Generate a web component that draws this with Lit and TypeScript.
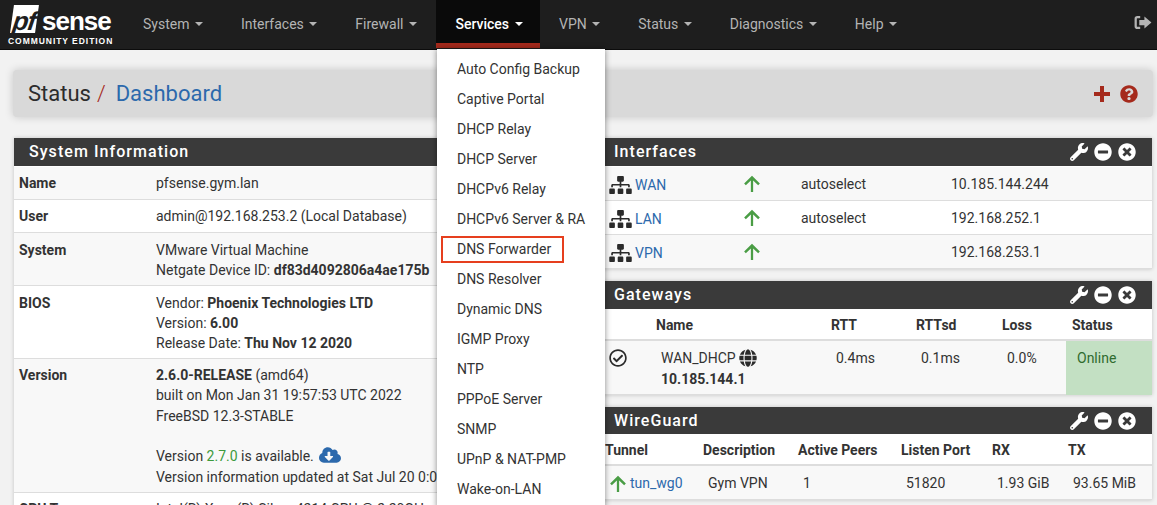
import { LitElement, html, css, svg } from 'lit';
import { customElement } from 'lit/decorators.js';

const icon = (box: string, d: string, cls: string) =>
  html`<svg class=${cls} viewBox=${box} fill="currentColor">${svg`<path d=${d}></path>`}</svg>`;

const WRENCH = 'M507.73 109.1c-2.24-9.03-13.54-12.09-20.12-5.51l-74.36 74.36-67.88-11.31-11.31-67.88 74.36-74.36c6.62-6.62 3.43-17.9-5.66-20.16-47.38-11.74-99.55.91-136.58 37.93-39.64 39.64-50.55 97.1-34.05 147.2L18.74 402.76c-24.99 24.99-24.99 65.51 0 90.5 24.99 24.99 65.51 24.99 90.5 0l213.21-213.21c50.12 16.71 107.47 5.68 147.37-34.22 37.07-37.07 49.7-89.32 37.91-136.73zM64 472c-13.25 0-24-10.75-24-24 0-13.26 10.75-24 24-24s24 10.74 24 24c0 13.25-10.75 24-24 24z';
const MINUS = 'M256 8C119 8 8 119 8 256s111 248 248 248 248-111 248-248S393 8 256 8zM124 296c-6.6 0-12-5.4-12-12v-56c0-6.6 5.4-12 12-12h264c6.6 0 12 5.4 12 12v56c0 6.6-5.4 12-12 12H124z';
const TIMES = 'M256 8C119 8 8 119 8 256s111 248 248 248 248-111 248-248S393 8 256 8zm121.6 313.1c4.7 4.7 4.7 12.3 0 17L338 377.6c-4.7 4.7-12.3 4.7-17 0L256 312l-65.1 65.6c-4.7 4.7-12.3 4.7-17 0L134.4 338c-4.7-4.7-4.7-12.3 0-17l65.6-65-65.6-65.1c-4.7-4.7-4.7-12.3 0-17l39.6-39.6c4.7-4.7 12.3-4.7 17 0l65 65.7 65.1-65.6c4.7-4.7 12.3-4.7 17 0l39.6 39.6c4.7 4.7 4.7 12.3 0 17L312 256l65.6 65.1z';
const QUESTION = 'M504 256c0 136.997-111.043 248-248 248S8 392.997 8 256C8 119.083 119.043 8 256 8s248 111.083 248 248zM262.655 90c-54.497 0-89.255 22.957-116.549 63.758-3.536 5.286-2.353 12.415 2.715 16.258l34.699 26.31c5.205 3.947 12.621 3.008 16.665-2.122 17.864-22.658 30.113-35.797 57.303-35.797 20.429 0 45.698 13.148 45.698 32.958 0 14.976-12.363 22.667-32.534 33.976C247.128 238.528 216 254.941 216 296v4c0 6.627 5.373 12 12 12h56c6.627 0 12-5.373 12-12v-1.333c0-28.462 83.186-29.647 83.186-106.667 0-58.002-60.165-102-116.531-102zM256 338c-25.365 0-46 20.635-46 46 0 25.364 20.635 46 46 46s46-20.636 46-46c0-25.365-20.635-46-46-46z';
const SITEMAP = 'M128 352H32c-17.67 0-32 14.33-32 32v96c0 17.67 14.33 32 32 32h96c17.67 0 32-14.33 32-32v-96c0-17.67-14.33-32-32-32zm-24-80h192v48h48v-48h192v48h48v-57.59c0-21.17-17.23-38.41-38.41-38.41H344v-64h40c17.67 0 32-14.33 32-32V32c0-17.67-14.33-32-32-32H256c-17.67 0-32 14.33-32 32v96c0 17.67 14.33 32 32 32h40v64H94.41C73.23 224 56 241.23 56 262.41V320h48v-48zm264 80h-96c-17.67 0-32 14.33-32 32v96c0 17.67 14.33 32 32 32h96c17.67 0 32-14.33 32-32v-96c0-17.67-14.33-32-32-32zm240 0h-96c-17.67 0-32 14.33-32 32v96c0 17.67 14.33 32 32 32h96c17.67 0 32-14.33 32-32v-96c0-17.67-14.33-32-32-32z';
const GLOBE = 'M336.5 160C322 70.7 287.8 8 248 8s-74 62.7-88.5 152h177zM152 256c0 22.2 1.2 43.5 3.3 64h185.3c2.1-20.5 3.3-41.8 3.3-64s-1.2-43.5-3.3-64H155.3c-2.1 20.5-3.3 41.8-3.3 64zm324.7-96c-28.6-67.9-86.5-120.4-158-141.6 24.4 33.8 41.2 84.7 50 141.6h108zM177.2 18.4C105.8 39.6 47.8 92.1 19.3 160h108c8.7-56.9 25.5-107.8 49.9-141.6zM487.4 192H372.7c2.1 21 3.3 42.5 3.3 64s-1.2 43-3.3 64h114.6c5.5-20.5 8.6-41.8 8.6-64s-3.1-43.5-8.5-64zM120 256c0-21.5 1.2-43 3.3-64H8.6C3.2 212.5 0 233.8 0 256s3.2 43.5 8.6 64h114.6c-2-21-3.2-42.5-3.2-64zm39.5 96c14.5 89.3 48.7 152 88.5 152s74-62.7 88.5-152h-177zm159.3 141.6c71.4-21.2 129.4-73.7 158-141.6h-108c-8.8 56.9-25.6 107.8-50 141.6zM19.3 352c28.6 67.9 86.5 120.4 158 141.6-24.4-33.8-41.2-84.7-50-141.6h-108z';
const CHECK = 'M256 8C119.033 8 8 119.033 8 256s111.033 248 248 248 248-111.033 248-248S392.967 8 256 8zm0 48c110.532 0 200 89.451 200 200 0 110.532-89.451 200-200 200-110.532 0-200-89.451-200-200 0-110.532 89.451-200 200-200m140.204 130.267l-22.536-22.718c-4.667-4.705-12.265-4.736-16.97-.068L215.346 303.697l-59.792-60.277c-4.667-4.705-12.265-4.736-16.97-.069l-22.719 22.536c-4.705 4.667-4.736 12.265-.068 16.971l90.781 91.516c4.667 4.705 12.265 4.736 16.97.068l172.589-171.204c4.704-4.668 4.734-12.266.067-16.971z';
const CLOUD = 'M537.6 226.6c4.1-10.7 6.4-22.4 6.4-34.6 0-53-43-96-96-96-19.7 0-38.1 6-53.3 16.2C367 64.2 315.3 32 256 32c-88.4 0-160 71.6-160 160 0 2.7.1 5.4.2 8.1C40.2 219.8 0 273.2 0 336c0 79.5 64.5 144 144 144h368c70.7 0 128-57.3 128-128 0-61.9-44-113.6-102.4-125.4zm-132.9 88.7L299.3 420.7c-6.2 6.2-16.4 6.2-22.6 0L171.3 315.3c-10.1-10.1-2.9-27.3 11.3-27.3H248V176c0-8.8 7.2-16 16-16h48c8.8 0 16 7.2 16 16v112h65.4c14.2 0 21.4 17.2 11.3 27.3z';
const ARROW = 'M8.3 17.5V5.2L3 10.4 1.2 8.6 9.5.4l8.3 8.2-1.8 1.8-5.3-5.2v12.3z';
const PLUS = 'M7 1h4v6h6v4h-6v6H7v-6H1V7h6z';
const SIGNOUT = 'M6.5 1H3.5A3 3 0 0 0 .5 4v8a3 3 0 0 0 3 3h3v-2.4H3.5a.6.6 0 0 1-.6-.6V4a.6.6 0 0 1 .6-.6h3zM11 1.5 18.5 8 11 14.5v-3.7H5.5V5.2H11z';

const NAV = ['System', 'Interfaces', 'Firewall', 'Services', 'VPN', 'Status', 'Diagnostics', 'Help'];
const SERVICES = [
  'Auto Config Backup', 'Captive Portal', 'DHCP Relay', 'DHCP Server', 'DHCPv6 Relay',
  'DHCPv6 Server & RA', 'DNS Forwarder', 'DNS Resolver', 'Dynamic DNS', 'IGMP Proxy',
  'NTP', 'PPPoE Server', 'SNMP', 'UPnP & NAT-PMP', 'Wake-on-LAN',
];
const IFACES = [
  ['WAN', 'autoselect', '10.185.144.244'],
  ['LAN', 'autoselect', '192.168.252.1'],
  ['VPN', '', '192.168.253.1'],
];

@customElement('app-root')
export class AppRoot extends LitElement {
  static styles = css`
    :host {
      display: block;
      height: 505px;
      overflow: hidden;
      background: #f2f2f2;
      color: #333;
      font: 14px/20px Roboto, sans-serif;
    }
    a { color: #2c69ac; text-decoration: none; }
    svg { display: block; flex: none; }

    .navbar {
      display: flex;
      height: 49px;
      background: #1e1e1e;
      border-bottom: 1px solid #0c0c0c;
      color: #b4b4b4;
    }
    .brand { width: 124px; flex: none; position: relative; color: #fff; }
    .pf {
      position: absolute;
      left: 12px;
      top: 5px;
      width: 25px;
      height: 28px;
      background: #fff;
      transform: skewX(-8deg);
      color: #1e1e1e;
      font: italic 700 26px/32px 'Liberation Sans', sans-serif;
      letter-spacing: -1px;
      text-align: center;
    }
    .sense {
      position: absolute;
      left: 42px;
      top: 6px;
      font: 700 26px/30px 'Liberation Sans', sans-serif;
      letter-spacing: -1px;
    }
    .edition {
      position: absolute;
      left: 8px;
      top: 36px;
      font: 700 8.5px/11px 'Liberation Sans', sans-serif;
      letter-spacing: 0.95px;
      white-space: nowrap;
    }
    .nav-item {
      position: relative;
      display: flex;
      align-items: center;
      height: 48px;
      padding: 0 19px;
      box-sizing: border-box;
      white-space: nowrap;
    }
    .nav-item.active {
      background: #0a0a0a;
      color: #fff;
      border-bottom: 5px solid #a52a1c;
      padding: 5px 17.5px 0 19.5px;
      font-weight: 500;
    }
    .caret {
      display: inline-block;
      margin-left: 5.5px;
      border-top: 4px solid currentColor;
      border-left: 4px solid transparent;
      border-right: 4px solid transparent;
    }
    .signout { margin: 15px 5px 0 auto; width: 18px; height: 15px; color: #b4b4b4; }

    .menu {
      position: absolute;
      z-index: 5;
      left: 1px;
      top: 49px;
      width: 168px;
      padding: 5px 0;
      background: #fff;
      box-shadow: 0 0 6px rgba(0, 0, 0, 0.45);
      color: #333;
      font-weight: 400;
    }
    .menu-item { position: relative; height: 30px; padding: 5px 20px; box-sizing: border-box; }
    .menu-item.marked::after {
      content: '';
      position: absolute;
      left: 4px;
      top: 2px;
      width: 119px;
      height: 23px;
      border: 2px solid #e63f1e;
    }

    .page { padding: 20px 4px 0 13px; }
    .title {
      display: flex;
      align-items: center;
      height: 47px;
      padding: 0 15px;
      background: #d9d9d9;
      border-radius: 4px;
      box-shadow: 0 0 8px rgba(0, 0, 0, 0.18);
      font-size: 22px;
    }
    .crumb { color: #2c2c2c; }
    .slash { color: #a52a1c; margin: 0 10px 0 6px; font-weight: 300; }
    .crumb-link { color: #2c69ac; }
    .actions { margin-left: auto; display: flex; gap: 9px; color: #a52a1c; }
    .actions svg { width: 18px; height: 18px; }

    .widgets {
      display: grid;
      grid-template-columns: 570px 553px;
      gap: 15px;
      margin: 21px 1px 0;
      align-items: start;
    }
    .col { display: flex; flex-direction: column; gap: 12px; }
    .panel { background: #fff; box-shadow: 0 0 4px rgba(0, 0, 0, 0.2); }
    .panel-head {
      display: flex;
      align-items: center;
      height: 28px;
      padding: 0 16px 0 15px;
      background: #3a3a3a;
      color: #fff;
      font-size: 16px;
      font-weight: 500;
      letter-spacing: 1.05px;
    }
    .compact .panel-head { height: 27px; }
    .tools { margin-left: auto; display: flex; gap: 6px; }
    .tools svg { width: 18px; height: 18px; }

    table { width: 100%; border-collapse: collapse; table-layout: fixed; white-space: nowrap; }
    th { text-align: left; padding: 6px 0 4px 6px; font-weight: 700; border-bottom: 2px solid #ddd; }
    td { padding: 6px 0 6px 11px; border-bottom: 1px solid #ddd; vertical-align: top; }
    tbody tr:nth-child(odd) td { background: #f8f8f8; }
    td .cell { display: flex; align-items: center; gap: 3px; height: 20px; }
    .sys, .ifaces { margin-top: 1px; }

    .sys td { padding-left: 5px; }
    .sys tr:last-child td { border-bottom: 0; }
    .sys td:first-child { font-weight: 700; }
    .sys .low td { padding-top: 7px; padding-bottom: 5px; }
    .sys .ver { line-height: 20.4px; padding-bottom: 5px; }
    .sys .spacer { height: 20px; }
    .sys b { font-weight: 700; }
    .c-label { width: 137px; }
    .new { color: #3c9a3c; }
    .cloud { display: inline-block; width: 22px; height: 18px; color: #2c69ac; vertical-align: -3px; margin-left: 2px; }

    .ifaces td { padding-top: 7px; padding-left: 10px; height: 20px; }
    .ifaces .cell { height: 19px; margin-top: 1px; }
    .ifaces .up { margin-top: 1px; }
    .i1 { width: 134px; } .i2 { width: 58px; } .i3 { width: 150px; }
    .site { width: 23px; height: 18px; color: #2b2b2b; }
    .up { width: 18px; height: 18px; color: #4a9d45; }

    .g1 { width: 51px; } .g2 { width: 175px; } .g3 { width: 85px; } .g4 { width: 86px; } .g5 { width: 70px; }
    .gate td { padding-top: 7px; padding-bottom: 5px; }
    .gate tbody td:first-child { padding-left: 10px; padding-top: 8px; }
    .gate .check { width: 18px; height: 18px; color: #2b2b2b; }
    .gate .globe { width: 18px; height: 18px; color: #2b2b2b; }
    .gate .ok { background: #c3e0c3 !important; color: #2f6b2f; border-bottom-color: #c3e0c3; }
    .gate b { display: block; font-weight: 700; margin-top: 1px; }

    .w1 { width: 98px; } .w2 { width: 95px; } .w3 { width: 103px; } .w4 { width: 91px; } .w5 { width: 76px; }
    .wg td { padding-top: 7px; }
    .wg tbody td:first-child { padding-left: 10px; }
    .wg .up { margin-top: 1px; }
  `;

  private panelHead(title: string) {
    return html`<div class="panel-head">
      ${title}
      <div class="tools">
        ${icon('0 0 512 512', WRENCH, '')}${icon('0 0 512 512', MINUS, '')}${icon('0 0 512 512', TIMES, '')}
      </div>
    </div>`;
  }

  render() {
    return html`
      <div class="navbar">
        <div class="brand">
          <div class="pf">pf</div>
          <div class="sense">sense</div>
          <div class="edition">COMMUNITY EDITION</div>
        </div>
        ${NAV.map(
          (n) => html`<div class="nav-item ${n === 'Services' ? 'active' : ''}">
            ${n}<span class="caret"></span>
            ${n === 'Services'
              ? html`<div class="menu">
                  ${SERVICES.map(
                    (s) => html`<div class="menu-item ${s === 'DNS Forwarder' ? 'marked' : ''}">${s}</div>`
                  )}
                </div>`
              : ''}
          </div>`
        )}
        ${icon('0 0 19 16', SIGNOUT, 'signout')}
      </div>

      <div class="page">
        <div class="title">
          <span class="crumb">Status</span>
          <span class="slash">/</span>
          <span class="crumb-link">Dashboard</span>
          <div class="actions">
            ${icon('0 0 18 18', PLUS, '')}${icon('0 0 512 512', QUESTION, '')}
          </div>
        </div>

        <div class="widgets">
          <div class="col">
            <div class="panel">
              ${this.panelHead('System Information')}
              <table class="sys">
                <colgroup><col class="c-label" /><col /></colgroup>
                <tbody>
                  <tr><td>Name</td><td>pfsense.gym.lan</td></tr>
                  <tr><td>User</td><td>admin@192.168.253.2 (Local Database)</td></tr>
                  <tr class="low">
                    <td>System</td>
                    <td>VMware Virtual Machine<br />Netgate Device ID: <b>df83d4092806a4ae175b</b></td>
                  </tr>
                  <tr class="low">
                    <td>BIOS</td>
                    <td>
                      Vendor: <b>Phoenix Technologies LTD</b><br />
                      Version: <b>6.00</b><br />
                      Release Date: <b>Thu Nov 12 2020</b>
                    </td>
                  </tr>
                  <tr>
                    <td>Version</td>
                    <td class="ver">
                      <b>2.6.0-RELEASE</b> (amd64)<br />
                      built on Mon Jan 31 19:57:53 UTC 2022<br />
                      FreeBSD 12.3-STABLE
                      <div class="spacer"></div>
                      Version <span class="new">2.7.0</span> is available.
                      ${icon('0 0 640 512', CLOUD, 'cloud')}<br />
                      Version information updated at Sat Jul 20 0:03:12 UTC 2024
                    </td>
                  </tr>
                  <tr><td>CPU Type</td><td>Intel(R) Xeon(R) Silver 4214 CPU @ 2.20GHz</td></tr>
                </tbody>
              </table>
            </div>
          </div>

          <div class="col">
            <div class="panel">
              ${this.panelHead('Interfaces')}
              <table class="ifaces">
                <colgroup><col class="i1" /><col class="i2" /><col class="i3" /><col /></colgroup>
                <tbody>
                  ${IFACES.map(
                    ([name, media, ip]) => html`<tr>
                      <td><div class="cell">${icon('0 0 640 512', SITEMAP, 'site')}<a>${name}</a></div></td>
                      <td>${icon('0 0 19 18', ARROW, 'up')}</td>
                      <td>${media}</td>
                      <td>${ip}</td>
                    </tr>`
                  )}
                </tbody>
              </table>
            </div>

            <div class="panel">
              ${this.panelHead('Gateways')}
              <table class="gate">
                <colgroup>
                  <col class="g1" /><col class="g2" /><col class="g3" /><col class="g4" /><col class="g5" /><col />
                </colgroup>
                <thead>
                  <tr><th></th><th>Name</th><th>RTT</th><th>RTTsd</th><th>Loss</th><th>Status</th></tr>
                </thead>
                <tbody>
                  <tr>
                    <td>${icon('0 0 512 512', CHECK, 'check')}</td>
                    <td>
                      <div class="cell">WAN_DHCP ${icon('0 0 496 512', GLOBE, 'globe')}</div>
                      <b>10.185.144.1</b>
                    </td>
                    <td>0.4ms</td>
                    <td>0.1ms</td>
                    <td>0.0%</td>
                    <td class="ok">Online</td>
                  </tr>
                </tbody>
              </table>
            </div>

            <div class="panel compact">
              ${this.panelHead('WireGuard')}
              <table class="wg">
                <colgroup>
                  <col class="w1" /><col class="w2" /><col class="w3" /><col class="w4" /><col class="w5" /><col />
                </colgroup>
                <thead>
                  <tr>
                    <th>Tunnel</th><th>Description</th><th>Active Peers</th><th>Listen Port</th><th>RX</th><th>TX</th>
                  </tr>
                </thead>
                <tbody>
                  <tr>
                    <td><div class="cell">${icon('0 0 19 18', ARROW, 'up')}<a>tun_wg0</a></div></td>
                    <td>Gym VPN</td>
                    <td>1</td>
                    <td>51820</td>
                    <td>1.93 GiB</td>
                    <td>93.65 MiB</td>
                  </tr>
                </tbody>
              </table>
            </div>
          </div>
        </div>
      </div>
    `;
  }
}
